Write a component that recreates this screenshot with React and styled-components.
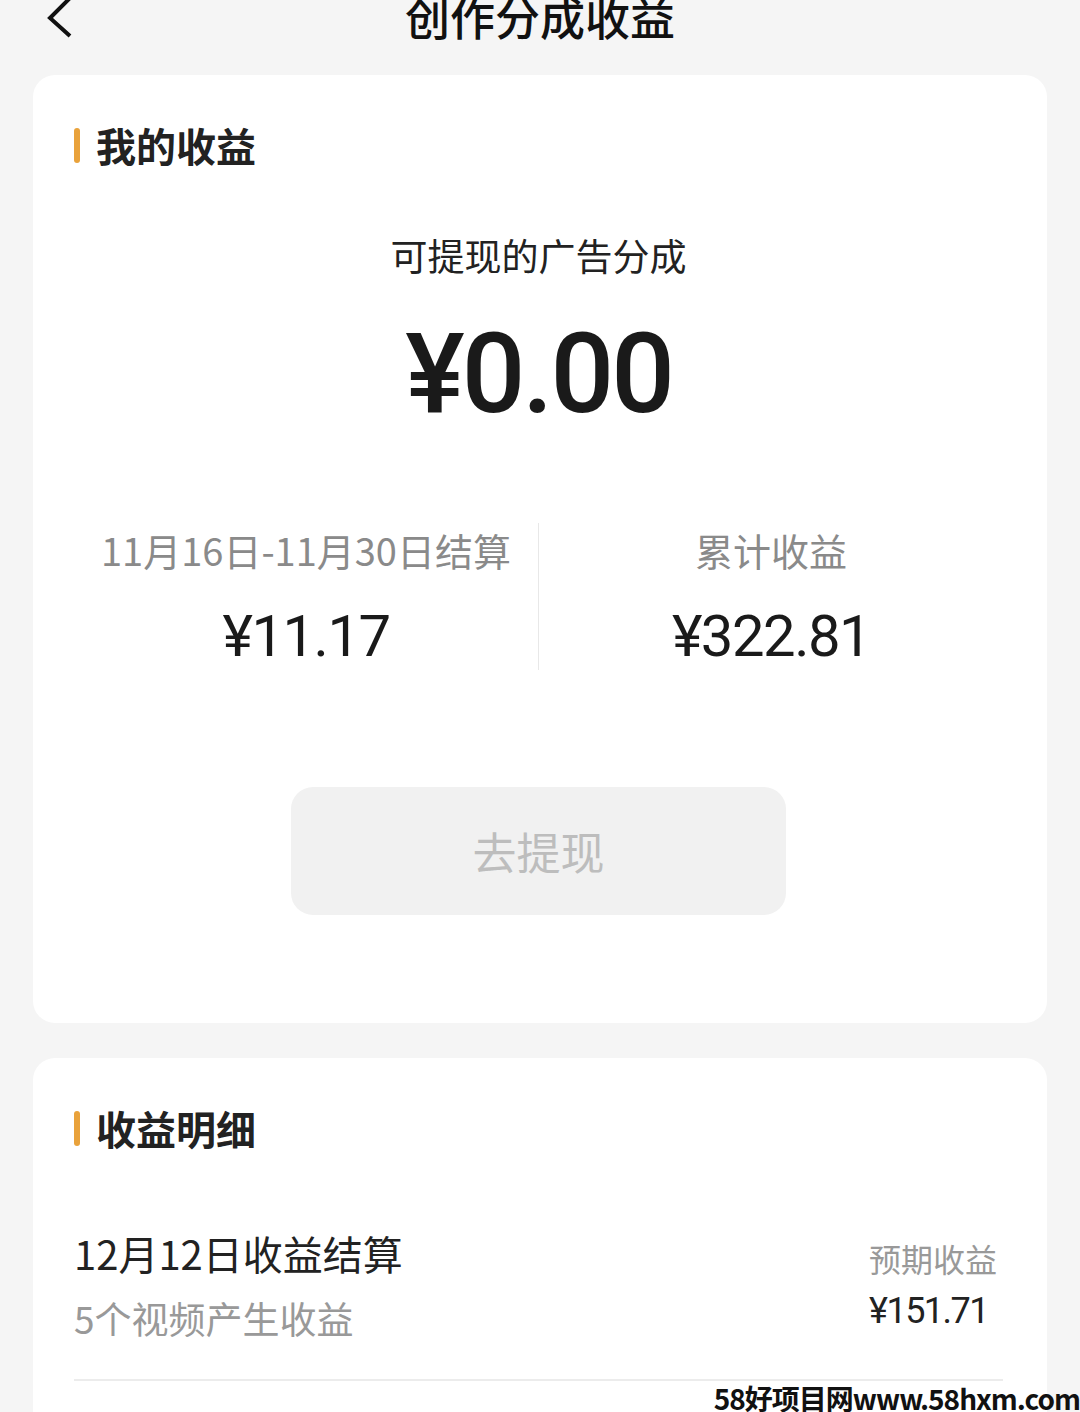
import styled, { createGlobalStyle } from 'styled-components'

const Global = createGlobalStyle`
  html, body {
    margin: 0;
    padding: 0;
    background: #f5f5f5;
    font-family: "Noto Sans CJK SC", Roboto, "Noto Sans", sans-serif;
    color: #222;
  }
`

const Page = styled.div`
  width: 1080px;
  height: 1412px;
  overflow: hidden;
  position: relative;
  background: #f5f5f5;
`

const Header = styled.div`
  height: 75px;
  position: relative;
  display: flex;
  justify-content: center;
  align-items: flex-start;
`

const Back = styled.svg`
  position: absolute;
  left: 42px;
  top: -6px;
`

const Title = styled.div`
  font-size: 45px;
  line-height: 44px;
  margin-top: -5px;
  font-weight: 500;
  color: #111;
`

const Card = styled.div`
  margin: 0 33px;
  background: #fff;
  border-radius: 22px;
  padding: 50px 44px 0 41px;
  height: ${p => p.$h}px;
  box-sizing: border-box;
  display: flex;
  flex-direction: column;
  & + & {
    margin-top: 35px;
  }
`

const SectionTitle = styled.div`
  display: flex;
  align-items: center;
  gap: 16px;
  font-size: 40px;
  line-height: 40px;
  font-weight: 700;
  color: #222;
  &::before {
    content: '';
    width: 6px;
    height: 35px;
    border-radius: 3px;
    background: #e9a23b;
  }
`

const Sub = styled.div`
  margin-top: 72px;
  text-align: center;
  font-size: 37px;
  line-height: 36px;
  color: #222;
`

const Big = styled.div`
  margin-top: 46px;
  text-align: center;
  font-family: Roboto, "Noto Sans", sans-serif;
  font-size: 112px;
  line-height: 110px;
  font-weight: 500;
  letter-spacing: -3px;
  color: #1a1a1a;
`

const Stats = styled.div`
  margin-top: 94px;
  display: grid;
  grid-template-columns: 1fr 1px 1fr;
  height: 147px;
`

const Stat = styled.div`
  display: flex;
  flex-direction: column;
  align-items: center;
  padding-top: 7px;
`

const Divider = styled.div`
  background: #e8e8e8;
`

const Label = styled.div`
  font-size: 38px;
  line-height: 40px;
  color: #8a8a8a;
  white-space: nowrap;
`

const Value = styled.div`
  margin-top: 38px;
  font-family: Roboto, "Noto Sans", sans-serif;
  font-size: 58px;
  line-height: 56px;
  letter-spacing: -1.5px;
  color: #1a1a1a;
`

const Button = styled.div`
  margin: 117px auto 0;
  width: 495px;
  height: 128px;
  border-radius: 22px;
  background: #f1f1f1;
  display: flex;
  align-items: center;
  justify-content: center;
  font-size: 44px;
  color: #bdbdbd;
`

const Row = styled.div`
  margin-top: 83px;
  display: flex;
  justify-content: space-between;
  padding-bottom: 40px;
  border-bottom: 2px solid #ececec;
`

const Left = styled.div`
  display: flex;
  flex-direction: column;
  gap: 22px;
`

const Right = styled.div`
  display: flex;
  flex-direction: column;
  align-items: flex-start;
  gap: 14px;
  padding-top: 8px;
  margin-right: 6px;
`

const RowTitle = styled.div`
  font-size: 40px;
  line-height: 44px;
  color: #222;
`

const RowSub = styled.div`
  font-size: 37px;
  line-height: 42px;
  color: #999;
`

const Muted = styled.div`
  font-size: 32px;
  line-height: 38px;
  color: #999;
`

const Amount = styled.div`
  font-family: Roboto, "Noto Sans", sans-serif;
  font-size: 36px;
  line-height: 40px;
  letter-spacing: -1.5px;
  color: #222;
`

const Watermark = styled.div`
  position: absolute;
  right: 0;
  bottom: 0;
  font-size: 28px;
  line-height: 28px;
  font-weight: 700;
  color: #111;
  letter-spacing: -1px;
  font-family: "Noto Sans CJK SC", "DejaVu Sans", sans-serif;
`

export default function App() {
  return (
    <Page>
      <Global />
      <Header>
        <Back width="36" height="46" viewBox="0 0 36 46">
          <path d="M28 4 L8 24 L28 42" fill="none" stroke="#111" strokeWidth="4" />
        </Back>
        <Title>创作分成收益</Title>
      </Header>

      <Card $h={948}>
        <SectionTitle>我的收益</SectionTitle>
        <Sub>可提现的广告分成</Sub>
        <Big>¥0.00</Big>
        <Stats>
          <Stat>
            <Label>11月16日-11月30日结算</Label>
            <Value>¥11.17</Value>
          </Stat>
          <Divider />
          <Stat>
            <Label>累计收益</Label>
            <Value>¥322.81</Value>
          </Stat>
        </Stats>
        <Button>去提现</Button>
      </Card>

      <Card $h={500}>
        <SectionTitle>收益明细</SectionTitle>
        <Row>
          <Left>
            <RowTitle>12月12日收益结算</RowTitle>
            <RowSub>5个视频产生收益</RowSub>
          </Left>
          <Right>
            <Muted>预期收益</Muted>
            <Amount>¥151.71</Amount>
          </Right>
        </Row>
      </Card>

      <Watermark>58好项目网www.58hxm.com</Watermark>
    </Page>
  )
}
